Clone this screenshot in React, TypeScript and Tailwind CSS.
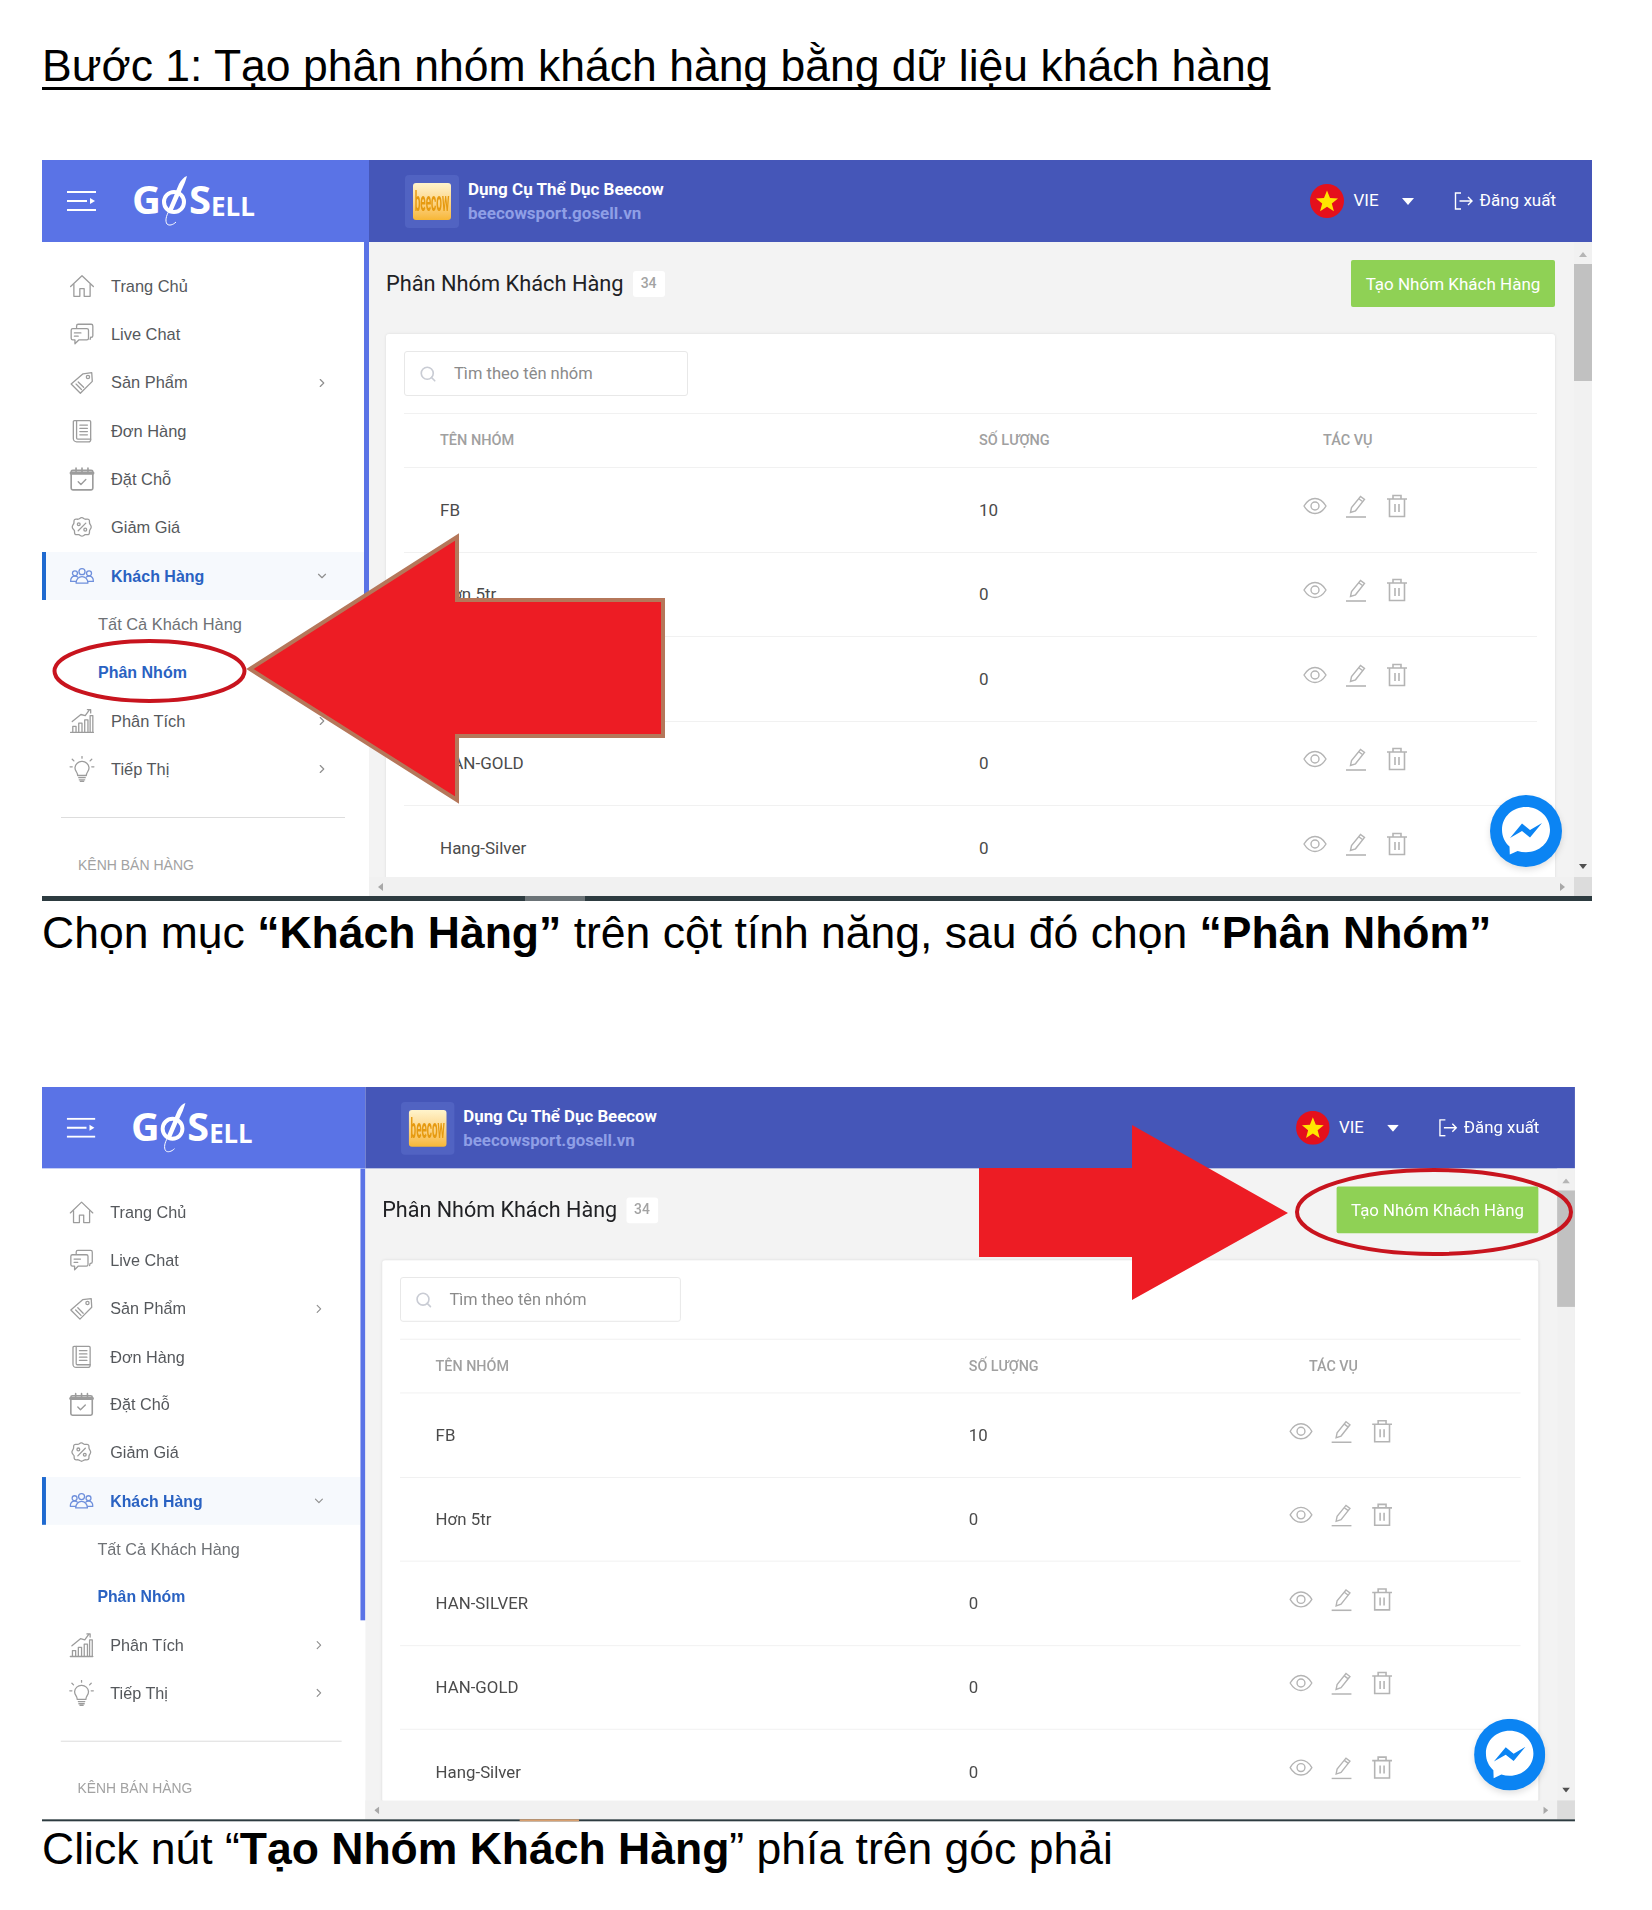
import type { ReactNode } from "react";
import { ChevronRight, ChevronDown, Search } from "lucide-react";

const roboto = "font-['Roboto',sans-serif]";

function Ico({ children, className = "stroke-[#9c9c9c]" }: { children: ReactNode; className?: string }) {
  return (
    <svg viewBox="0 0 24 24" className={`h-[26px] w-[26px] shrink-0 fill-none ${className}`} strokeWidth={1.2} strokeLinejoin="round" strokeLinecap="round">
      {children}
    </svg>
  );
}

const HomeIcon = () => (
  <Ico>
    <path d="M1.5 12.5 12 2.5l10.5 10" />
    <path d="M4.5 10.5V21.5h5.5v-7h4v7h5.5V10.5" />
  </Ico>
);
const ChatIcon = () => (
  <Ico>
    <path d="M7 6V4.5A1.5 1.5 0 0 1 8.500 3h12A1.500 1.500 0 0 1 22 4.500v9a1.500 1.500 0 0 1-1.500 1.500H20l-.5 2" />
    <path d="M3.500 7h13A1.500 1.500 0 0 1 18 8.500V16a1.500 1.500 0 0 1-1.500 1.500H9l-3.500 3.500v-3.500h-2A1.500 1.500 0 0 1 2 16V8.500A1.500 1.500 0 0 1 3.500 7Z" />
    <path d="M5 11h6M5 14h3.500" />
  </Ico>
);
const TagIcon = () => (
  <Ico>
    <path d="M13 3.500 21 2.500l.5 8-11 11L2 13Z" />
    <circle cx="17.500" cy="6.500" r="1.500" />
    <path d="m6.500 13 5 5M8.500 11l5 5" />
  </Ico>
);
const OrderIcon = () => (
  <Ico>
    <path d="M5 2.500h14a1 1 0 0 1 1 1V20a2 2 0 0 1-2 2H7a3 3 0 0 1-3-3V3.500a1 1 0 0 1 1-1Z" />
    <path d="M7 2.500V18.500a1 1 0 0 0 1 1h12" />
    <path d="M10 6.500h7M10 9.500h7M10 12.500h7M10 15.500h7" />
  </Ico>
);
const CalendarIcon = () => (
  <Ico>
    <rect x="2" y="4" width="20" height="18" rx="1.500" strokeWidth={1.5} />
    <path d="M2 6.500h20" strokeWidth={3} />
    <path d="M6.500 2v3M12 2v3M17.500 2v3" strokeWidth={1.500} />
    <path d="m8.500 14.500 2.500 2.500 4.500-4.500" strokeWidth={1.300} />
  </Ico>
);
const DiscountIcon = () => (
  <Ico>
    <path d="M12 2.500c1.200 0 1.800 1.200 3 1.400 1.300.2 2.500-.5 3.400.4s.3 2.100.6 3.300c.3 1.200 1.500 1.800 1.500 3.400s-1.200 2.200-1.500 3.400c-.3 1.200.3 2.400-.6 3.300s-2.100.2-3.400.5c-1.200.3-1.800 1.300-3 1.300s-1.800-1-3-1.300c-1.300-.3-2.500.4-3.400-.5s-.3-2.100-.6-3.300C4.200 13.200 3 12.600 3 11s1.200-2.200 1.500-3.400c.3-1.200-.3-2.400.6-3.300s2.100-.2 3.400-.4c1.200-.2 1.800-1.400 3-1.400Z" />
    <path d="m8.500 14.500 7-7" />
    <circle cx="9" cy="8.500" r="1.300" />
    <circle cx="15" cy="13.500" r="1.300" />
  </Ico>
);
const UsersIcon = () => (
  <Ico className="stroke-[#6f90dc]">
    <circle cx="12" cy="8" r="2.800" />
    <circle cx="5.500" cy="9.500" r="2.300" />
    <circle cx="18.500" cy="9.500" r="2.300" />
    <path d="M6.500 18.500c0-3.500 2.500-6 5.500-6s5.500 2.500 5.500 6Z" />
    <path d="M6.500 17H1.500c0-3 1.500-4.800 4-4.800 1 0 1.800.2 2.500.8M17.500 17h5c0-3-1.500-4.800-4-4.800-1 0-1.800.2-2.500.8" />
  </Ico>
);
const ChartIcon = () => (
  <Ico>
    <path d="M1.500 22.500h21" />
    <path d="M3.500 22v-5h3v5M9 22v-8h3v8M14.500 22v-11h3v11M19.500 22V7h2.500v15" />
    <path d="m3 12.500 8-6.500 4 1 4-5.500M17 1.500h3v3" />
  </Ico>
);
const BulbIcon = () => (
  <Ico>
    <path d="M8 16c0-3-2.500-4-2.500-7.200A6.300 6.300 0 0 1 12 3a6.300 6.300 0 0 1 6.500 5.800C18.500 12 16 13 16 16Z" transform="translate(0 2)" />
    <path d="M9 20h6M9.500 22h5M10.500 23.500h3" />
    <path d="M12 .5v1.500M3 3l1.500 1.500M21 3l-1.500 1.500M1 10h2M21 10h2" />
  </Ico>
);

const ActionIcons = () => (
  <div className="flex items-center -translate-y-[4px]">
    <svg viewBox="0 0 24 18" className="h-[18px] w-[24px] fill-none stroke-[#b4b4b4]" strokeWidth={1.400}>
      <path d="M1 9c3-5 6.500-7.500 11-7.500S20 4 23 9c-3 5-6.500 7.500-11 7.500S4 14 1 9Z" />
      <circle cx="12" cy="9" r="4" />
    </svg>
    <svg viewBox="0 0 22 24" className="ml-[18px] h-[24px] w-[22px] fill-none stroke-[#b4b4b4]" strokeWidth={1.400}>
      <path d="M1 23h20" strokeWidth={1.600} />
      <path d="M5.500 18.500 6.500 13.500 15.500 2.500 19.500 5.500 10.500 16.800Z" />
      <path d="m13.800 4.800 4 3" />
    </svg>
    <svg viewBox="0 0 22 24" className="ml-[19px] h-[24px] w-[22px] fill-none stroke-[#b4b4b4]" strokeWidth={1.600}>
      <path d="M1 5h20M7 5V1.500h8V5M3.500 5v17.500h15V5" />
      <path d="M9 10v8M13 10v8" />
    </svg>
  </div>
);

const menuTop = [
  { label: "Trang Chủ", icon: <HomeIcon /> },
  { label: "Live Chat", icon: <ChatIcon /> },
  { label: "Sản Phẩm", icon: <TagIcon />, chevron: true },
  { label: "Đơn Hàng", icon: <OrderIcon /> },
  { label: "Đặt Chỗ", icon: <CalendarIcon /> },
  { label: "Giảm Giá", icon: <DiscountIcon /> },
];

const menuBottom = [
  { label: "Phân Tích", icon: <ChartIcon />, chevron: true },
  { label: "Tiếp Thị", icon: <BulbIcon />, chevron: true },
];

const rows = [
  { name: "FB", qty: 10 },
  { name: "Hơn 5tr", qty: 0 },
  { name: "HAN-SILVER", qty: 0 },
  { name: "HAN-GOLD", qty: 0 },
  { name: "Hang-Silver", qty: 0 },
];

function MenuRow({ label, icon, chevron }: { label: string; icon: ReactNode; chevron?: boolean }) {
  return (
    <div className="flex h-[48.300px] items-center pl-[27px] pr-[35px] text-[16.400px] text-[#55585c]">
      {icon}
      <span className="ml-[16px] flex-1">{label}</span>
      {chevron && <ChevronRight size={14} strokeWidth={2} className="text-[#8f8f8f]" />}
    </div>
  );
}

function Sidebar() {
  return (
    <div className="flex w-[327px] shrink-0 bg-white">
      <div className="min-w-0 flex-1 pt-[20px]">
        {menuTop.map((m) => (
          <MenuRow key={m.label} {...m} />
        ))}
        <div className="flex h-[48.300px] items-center border-l-[4px] border-[#1f6ad0] bg-[#f6f9fd] pl-[23px] pr-[35px] text-[16px] font-bold text-[#2a62c2]">
          <UsersIcon />
          <span className="ml-[16px] flex-1 pt-[2px]">Khách Hàng</span>
          <ChevronDown size={14} strokeWidth={2} className="text-[#8f8f8f]" />
        </div>
        <div className="flex h-[48.300px] items-center pl-[56px] text-[16.400px] text-[#6e7175]">Tất Cả Khách Hàng</div>
        <div className="flex h-[48.300px] items-center pl-[56px] text-[16px] font-bold text-[#2a62c2]">Phân Nhóm</div>
        {menuBottom.map((m) => (
          <MenuRow key={m.label} {...m} />
        ))}
        <div className="mx-[19px] mt-[24px] border-t border-[#dddddd]" />
        <div className="mt-[37px] pl-[36px] text-[14px] font-medium text-[#a2a2a2]">KÊNH BÁN HÀNG</div>
      </div>
      <div className="h-[454px] w-[5px] shrink-0 bg-[#5a73e6]" />
    </div>
  );
}

function Logo() {
  return (
    <div className="mb-[10px] ml-[36px] flex items-end font-['Open_Sans',sans-serif] font-bold leading-none text-white">
      <span className="text-[40px]">G</span>
      <svg viewBox="0 0 30 54" className="mx-[-1px] mb-[-9px] h-[54px] w-[30px] fill-none stroke-white">
        <circle cx="14" cy="28" r="10" strokeWidth={4} />
        <path d="M27 2c-3 1-6 4-8 8L8 36l4 2 11-25c2-4 3-8 4-11Z" fill="#fff" stroke="none" />
        <path d="M9 37c-3 5-4 10-2 13 2 2 6 1 9-2" strokeWidth={1} />
      </svg>
      <span className="text-[40px]">S</span>
      <span className="text-[26px]">ELL</span>
    </div>
  );
}

function TopBar() {
  return (
    <div className="flex h-[82px] shrink-0 text-white">
      <div className="flex w-[327px] shrink-0 items-center bg-[#5a73e6] pl-[25px]">
        <svg viewBox="0 0 29 20" className="h-[20px] w-[29px] stroke-white" strokeWidth={2}>
          <path d="M0 1h29M0 10h20M0 19h29" />
          <path d="m23 7 5 3-5 3Z" fill="#fff" stroke="none" />
        </svg>
        <Logo />
      </div>
      <div className={`flex flex-1 items-center bg-[#4556b8] pl-[36px] pr-[36px] ${roboto}`}>
        <div className="flex h-[53px] w-[54px] items-center justify-center rounded bg-[#5163c2]">
          <div className="flex h-[37px] w-[38px] items-center justify-center overflow-hidden rounded-[3px] bg-gradient-to-b from-[#fff4cc] to-[#f7b733] text-[10px] font-bold text-[#e69a10]">
            <span className="scale-y-[2.800]">beecow</span>
          </div>
        </div>
        <div className="ml-[9px] flex-1 font-bold">
          <div className="text-[17px] leading-[24px]">Dụng Cụ Thể Dục Beecow</div>
          <div className="text-[17px] leading-[24px] text-[#8f9fe6]">beecowsport.gosell.vn</div>
        </div>
        <svg viewBox="0 0 34 34" className="h-[34px] w-[34px]">
          <circle cx="17" cy="17" r="17" fill="#e5101c" />
          <path d="m17 6.500 3 7.500 8 .4-6.200 5 2.100 7.800-6.900-4.400-6.900 4.400 2.100-7.800-6.200-5 8-.4Z" fill="#ffe600" />
        </svg>
        <span className="ml-[9px] text-[17px]">VIE</span>
        <svg viewBox="0 0 12 7" className="ml-[23px] h-[7px] w-[12px] fill-white">
          <path d="M0 0h12L6 7Z" />
        </svg>
        <svg viewBox="0 0 20 18" className="ml-[40px] h-[18px] w-[20px] fill-none stroke-white" strokeWidth={1.400}>
          <path d="M7 1H1.500v16H7M5.500 9H18M14 5l4 4-4 4" />
        </svg>
        <span className="ml-[6px] text-[17px]">Đăng xuất</span>
      </div>
    </div>
  );
}

function TableArea() {
  return (
    <div className={`flex min-h-0 flex-1 ${roboto}`}>
      <div className="relative min-w-0 flex-1 overflow-hidden pl-[17px] pr-[19px] pt-[18px]">
        <div className="flex h-[47px] items-center">
          <span className="pt-[1px] text-[21.800px] text-[#202124]">Phân Nhóm Khách Hàng</span>
          <span className="ml-[9px] flex h-[26px] w-[32px] items-center justify-center rounded-[3px] bg-white text-[14px] font-medium text-[#a3a3a3]">34</span>
          <button className="ml-auto flex h-[47px] w-[204px] items-center justify-center rounded-[2px] bg-[#8fd155] pt-[2px] text-[17px] text-white">Tạo Nhóm Khách Hàng</button>
        </div>
        <div className="mt-[27px] h-[600px] rounded-t-[3px] bg-white px-[18px] pt-[17px] shadow-[0_0_3px_rgba(0,0,0,0.1)]">
          <div className="flex h-[45px] w-[284px] items-center rounded-[3px] border border-[#e8e8e8] pl-[14px]">
            <Search size={18} strokeWidth={2.200} className="text-[#c9ccd4]" />
            <span className="ml-[17px] pt-[1px] text-[16.500px] text-[#8a8a8a]">Tìm theo tên nhóm</span>
          </div>
          <div className="mt-[17px] grid h-[55px] grid-cols-[575px_344px_1fr] items-center border-y border-[#f1f1f1] text-[14.500px] font-medium text-[#a0a0a0]">
            <span className="pl-[36px]">TÊN NHÓM</span>
            <span>SỐ LƯỢNG</span>
            <span>TÁC VỤ</span>
          </div>
          {rows.map((r) => (
            <div key={r.name} className="grid h-[84.500px] grid-cols-[575px_324px_1fr] items-center border-b border-[#f1f1f1] text-[17px] text-[#4b4b4b]">
              <span className="pl-[36px] pt-[1px]">{r.name}</span>
              <span className="pt-[1px]">{r.qty}</span>
              <ActionIcons />
            </div>
          ))}
        </div>
        <svg viewBox="0 0 72 72" className="absolute bottom-[10px] right-[12px] h-[72px] w-[72px] drop-shadow-md">
          <circle cx="36" cy="36" r="36" fill="#0b84f3" />
          <path d="M36 12c-13.500 0-24 9.800-24 22.800 0 6.800 2.900 12.700 7.500 16.800l.3 8 7.800-3.600c2.600.8 5.500 1.200 8.400 1.200 13.500 0 24-9.800 24-22.400S49.500 12 36 12Z" fill="#fff" />
          <path d="m20 43 12-14.500 8 6.500 12-7-12 14.500-8-6.500Z" fill="#0b84f3" />
        </svg>
      </div>
      <div className="flex w-[18px] shrink-0 flex-col items-center bg-[#f1f1f1]">
        <svg viewBox="0 0 8 5" className="mt-[10px] h-[5px] w-[8px] fill-[#b5b5b5]">
          <path d="M4 0 8 5H0Z" />
        </svg>
        <div className="mt-[7px] h-[117px] w-full bg-[#c1c1c1]" />
        <svg viewBox="0 0 8 5" className="mb-[8px] mt-auto h-[5px] w-[8px] fill-[#505050]">
          <path d="M0 0h8L4 5Z" />
        </svg>
      </div>
    </div>
  );
}

function Shot({ barClass, markClass }: { barClass: string; markClass: string }) {
  return (
    <div className="flex w-[1550px] flex-col overflow-hidden">
      <TopBar />
      <div className="flex h-[654px] min-h-0">
        <Sidebar />
        <div className="flex min-w-0 flex-1 flex-col bg-[#f3f3f3]">
          <TableArea />
          <div className="flex h-[19px] shrink-0 items-center bg-[#f1f1f1] pl-[9px]">
            <svg viewBox="0 0 5 8" className="h-[8px] w-[5px] fill-[#a8a8a8]">
              <path d="M5 0v8L0 4Z" />
            </svg>
            <svg viewBox="0 0 5 8" className="ml-auto mr-[9px] h-[8px] w-[5px] fill-[#a8a8a8]">
              <path d="M0 0v8l5-4Z" />
            </svg>
            <div className="h-full w-[18px] bg-[#dcdcdc]" />
          </div>
        </div>
      </div>
      <div className={`flex shrink-0 ${barClass}`}>
        <div className={`ml-[483px] w-[60px] ${markClass}`} />
      </div>
    </div>
  );
}

export default function App() {
  return (
    <div className="h-[1910px] w-[1652px] overflow-hidden bg-white pl-[42px] font-['Liberation_Sans',Arial,sans-serif] text-black">
      <div className="h-[160px] pt-[37px]">
        <h1 className="text-[44.500px] leading-[58px] underline decoration-[3px] underline-offset-[6px] [text-decoration-skip-ink:none]">Bước 1: Tạo phân nhóm khách hàng bằng dữ liệu khách hàng</h1>
      </div>

      <div className="relative">
        <Shot barClass="h-[5px] bg-[#2d3b40]" markClass="bg-[#6b7377]" />
        <svg viewBox="0 0 1550 741" className="absolute left-0 top-0 h-[741px] w-[1550px]">
          <polygon points="208,509 415,377 415,440 621,440 621,576 415,576 415,640" fill="#ed1c24" stroke="#b5775a" strokeWidth={4} />
          <ellipse cx="107.500" cy="511" rx="95" ry="30" fill="none" stroke="#c8141e" strokeWidth={4} />
        </svg>
      </div>

      <div className="h-[186px] pt-[3px]">
        <p className="text-[44.500px] leading-[58px]">
          Chọn mục <b>“Khách Hàng”</b> trên cột tính năng, sau đó chọn <b>“Phân Nhóm”</b>
        </p>
      </div>

      <div className="relative h-[733px]">
        <div className="origin-top-left scale-x-[0.989] scale-y-[0.995]">
          <Shot barClass="h-[2px] bg-[#2d3b40]" markClass="bg-[#d8a070]" />
        </div>
        <svg viewBox="0 0 1550 741" className="absolute left-0 top-0 h-[741px] w-[1550px]">
          <polygon points="937,81 1090,81 1090,38 1246,126 1090,213 1090,170 937,170" fill="#ed1c24" />
          <ellipse cx="1392" cy="125" rx="137" ry="42" fill="none" stroke="#c8141e" strokeWidth={4} />
        </svg>
      </div>

      <p className="text-[44.500px] leading-[58px]">
        Click nút “<b>Tạo Nhóm Khách Hàng</b>” phía trên góc phải
      </p>
    </div>
  );
}
